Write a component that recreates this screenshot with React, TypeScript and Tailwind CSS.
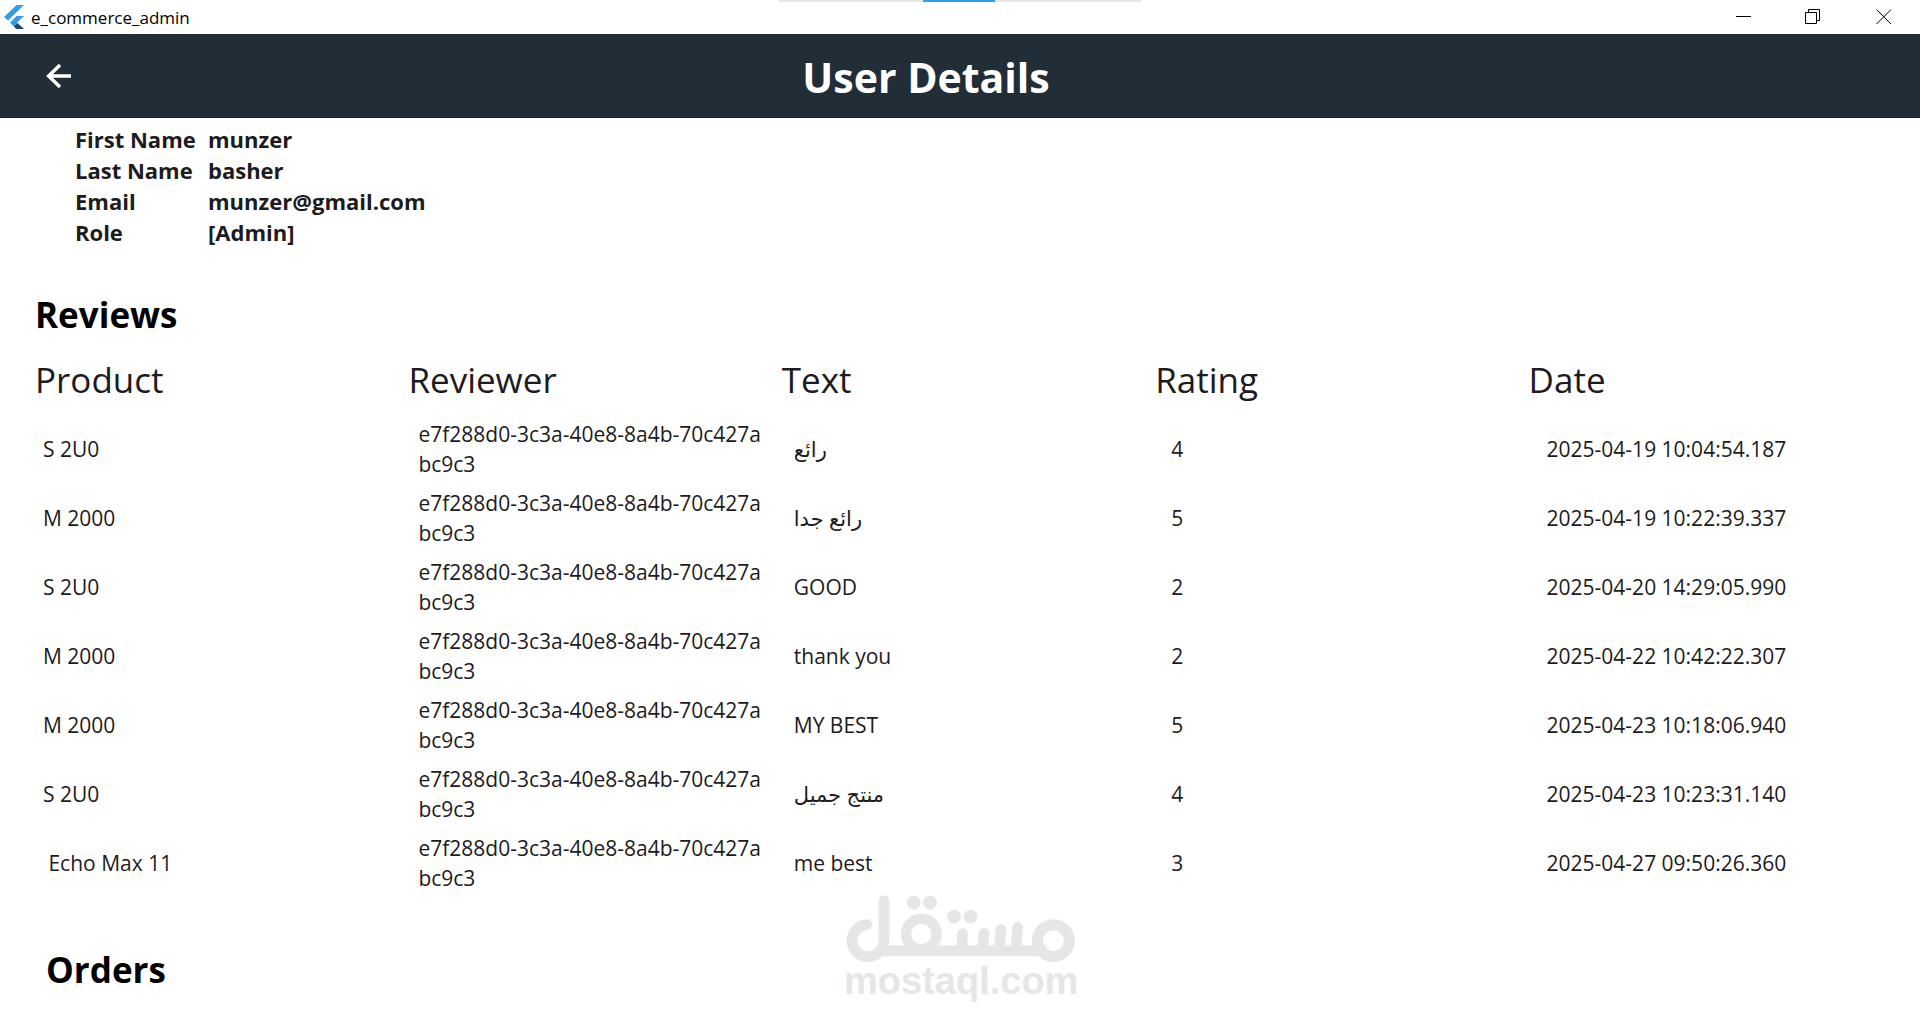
type Review = {
  product: string;
  reviewer: string;
  text: string;
  rating: number;
  date: string;
};

const REVIEWER = "e7f288d0-3c3a-40e8-8a4b-70c427abc9c3";

const details = [
  { label: "First Name", value: "munzer" },
  { label: "Last Name", value: "basher" },
  { label: "Email", value: "munzer@gmail.com" },
  { label: "Role", value: "[Admin]" },
];

const columns = ["Product", "Reviewer", "Text", "Rating", "Date"];

const reviews: Review[] = [
  { product: "S 2U0", reviewer: REVIEWER, text: "رائع", rating: 4, date: "2025-04-19 10:04:54.187" },
  { product: "M 2000", reviewer: REVIEWER, text: "رائع جدا", rating: 5, date: "2025-04-19 10:22:39.337" },
  { product: "S 2U0", reviewer: REVIEWER, text: "GOOD", rating: 2, date: "2025-04-20 14:29:05.990" },
  { product: "M 2000", reviewer: REVIEWER, text: "thank you", rating: 2, date: "2025-04-22 10:42:22.307" },
  { product: "M 2000", reviewer: REVIEWER, text: "MY BEST", rating: 5, date: "2025-04-23 10:18:06.940" },
  { product: "S 2U0", reviewer: REVIEWER, text: "منتج جميل", rating: 4, date: "2025-04-23 10:23:31.140" },
  { product: " Echo Max 11", reviewer: REVIEWER, text: "me best", rating: 3, date: "2025-04-27 09:50:26.360" },
];

const FlutterLogo = () => (
  <svg className="h-6 w-5" viewBox="0 0 20 24">
    <path d="M12.5 0H20L4 15.5L0 12Z" fill="#369ce6" />
    <path d="M12.5 11H20L13 17.8L20 24H12.5L6 17.8Z" fill="#369ce6" />
    <path d="M10 21.5L13.5 18.3L20 24H12.5Z" fill="#27476b" />
  </svg>
);

const TitleBar = () => (
  <div className="relative flex h-[34px] items-center justify-between bg-white">
    <div className="flex items-center gap-[7px] pl-1">
      <FlutterLogo />
      <span className="pt-0.5 text-[17px] leading-6 text-black">e_commerce_admin</span>
    </div>

    {/* Loading strip */}
    <div className="absolute top-0 left-[779px] flex h-0.5 w-[362px] bg-[#e6e6e6]">
      <div className="ml-36 w-[72px] bg-[#369ce6]" />
    </div>

    <div className="flex">
      <button aria-label="Minimize" className="flex h-[34px] w-[70px] items-center justify-center">
        <svg className="size-4" viewBox="0 0 16 16" fill="none" stroke="#000">
          <path d="M1 7.5H16" />
        </svg>
      </button>
      <button aria-label="Restore" className="flex h-[34px] w-[70px] items-center justify-center">
        <svg className="size-4" viewBox="0 0 16 16" fill="none" stroke="#000">
          <path d="M0.5 3.5H11.5V14.5H0.5ZM3.5 3.5V0.5H14.5V11.5H11.5" />
        </svg>
      </button>
      <button aria-label="Close" className="flex h-[34px] w-[72px] items-center justify-center">
        <svg className="size-4" viewBox="0 0 16 16" fill="none" stroke="#000">
          <path d="M0.5 0.5L15 15M15 0.5L0.5 15" />
        </svg>
      </button>
    </div>
  </div>
);

const AppBar = () => (
  <header className="flex h-[84px] items-center border-b border-[#1b222c] bg-[#212e37] pr-[68px] text-white">
    <button aria-label="Back" className="ml-[46px] flex size-[26px] items-center justify-center">
      <svg className="size-[26px]" viewBox="0 0 26 26" fill="none" stroke="currentColor" strokeWidth="3.4">
        <path d="M25 13H3M14 2L2.6 13L14 24" />
      </svg>
    </button>
    <h1 className="flex-1 pt-0.5 pr-[72px] text-center text-[41px] leading-[60px] font-bold">User Details</h1>
  </header>
);

const Watermark = () => (
  <div className="pointer-events-none absolute bottom-0 left-[844px] w-[232px] pb-[21px] text-[#e6e6e6]">
    <svg className="block h-[68px] w-full" viewBox="75 41 690 204" fill="none" stroke="currentColor">
      <path
        d="M141 130A48 48 0 1 0 192 178V58"
        strokeWidth="32"
        strokeLinecap="round"
        strokeLinejoin="round"
      />
      <path d="M176 208H680" strokeWidth="33" />
      <circle cx="304" cy="158" r="46" strokeWidth="31" />
      <circle cx="700" cy="178" r="48" strokeWidth="33" />
      <path
        d="M428 157L425 200M492 157L488 200M543 145L538 200M593 138L588 200"
        strokeWidth="32"
        strokeLinecap="round"
      />
      <g fill="currentColor" stroke="none">
        <circle cx="281" cy="64" r="21" />
        <circle cx="330" cy="64" r="21" />
        <circle cx="402" cy="106" r="21" />
        <circle cx="452" cy="106" r="21" />
      </g>
    </svg>
    <p className="font-['Liberation_Sans',Arial,sans-serif] text-[38px] leading-[36px] font-bold">
      mostaql.com
    </p>
  </div>
);

const App = () => {
  return (
    <div className="relative flex min-h-screen flex-col bg-white font-['Open_Sans','Noto_Sans','DejaVu_Sans',sans-serif] text-[#1d1b20]">
      <TitleBar />
      <AppBar />

      <main className="flex-1 pt-1.5 pr-[18px] pl-[35px]">
        {/* User info */}
        <dl className="grid grid-cols-[133px_1fr] pl-10 text-[22px] leading-[31px] font-bold">
          {details.map((item) => (
            <div key={item.label} className="contents">
              <dt>{item.label}</dt>
              <dd>{item.value}</dd>
            </div>
          ))}
        </dl>

        {/* Reviews */}
        <h2 className="mt-[41px] text-[35px] leading-[52px] font-bold text-black">Reviews</h2>
        <table className="mt-[13px] w-full table-fixed text-left">
          <thead>
            <tr className="h-[60px] align-top text-[35px] leading-[52px]">
              {columns.map((column) => (
                <th key={column} className="p-0 font-normal">
                  {column}
                </th>
              ))}
            </tr>
          </thead>
          <tbody className="text-[21px] leading-[30px]">
            {reviews.map((review) => (
              <tr key={review.date} className="h-[69px]">
                <td className="pl-2 whitespace-pre">{review.product}</td>
                <td className="pr-4 pl-2.5 break-all">{review.reviewer}</td>
                <td className="pl-3">{review.text}</td>
                <td className="pl-4">{review.rating}</td>
                <td className="pl-[18px]">{review.date}</td>
              </tr>
            ))}
          </tbody>
        </table>

        {/* Orders */}
        <h2 className="mt-[47px] pl-[11px] text-[35px] leading-[52px] font-bold text-black">Orders</h2>
      </main>

      <Watermark />
    </div>
  );
};

export default App;
